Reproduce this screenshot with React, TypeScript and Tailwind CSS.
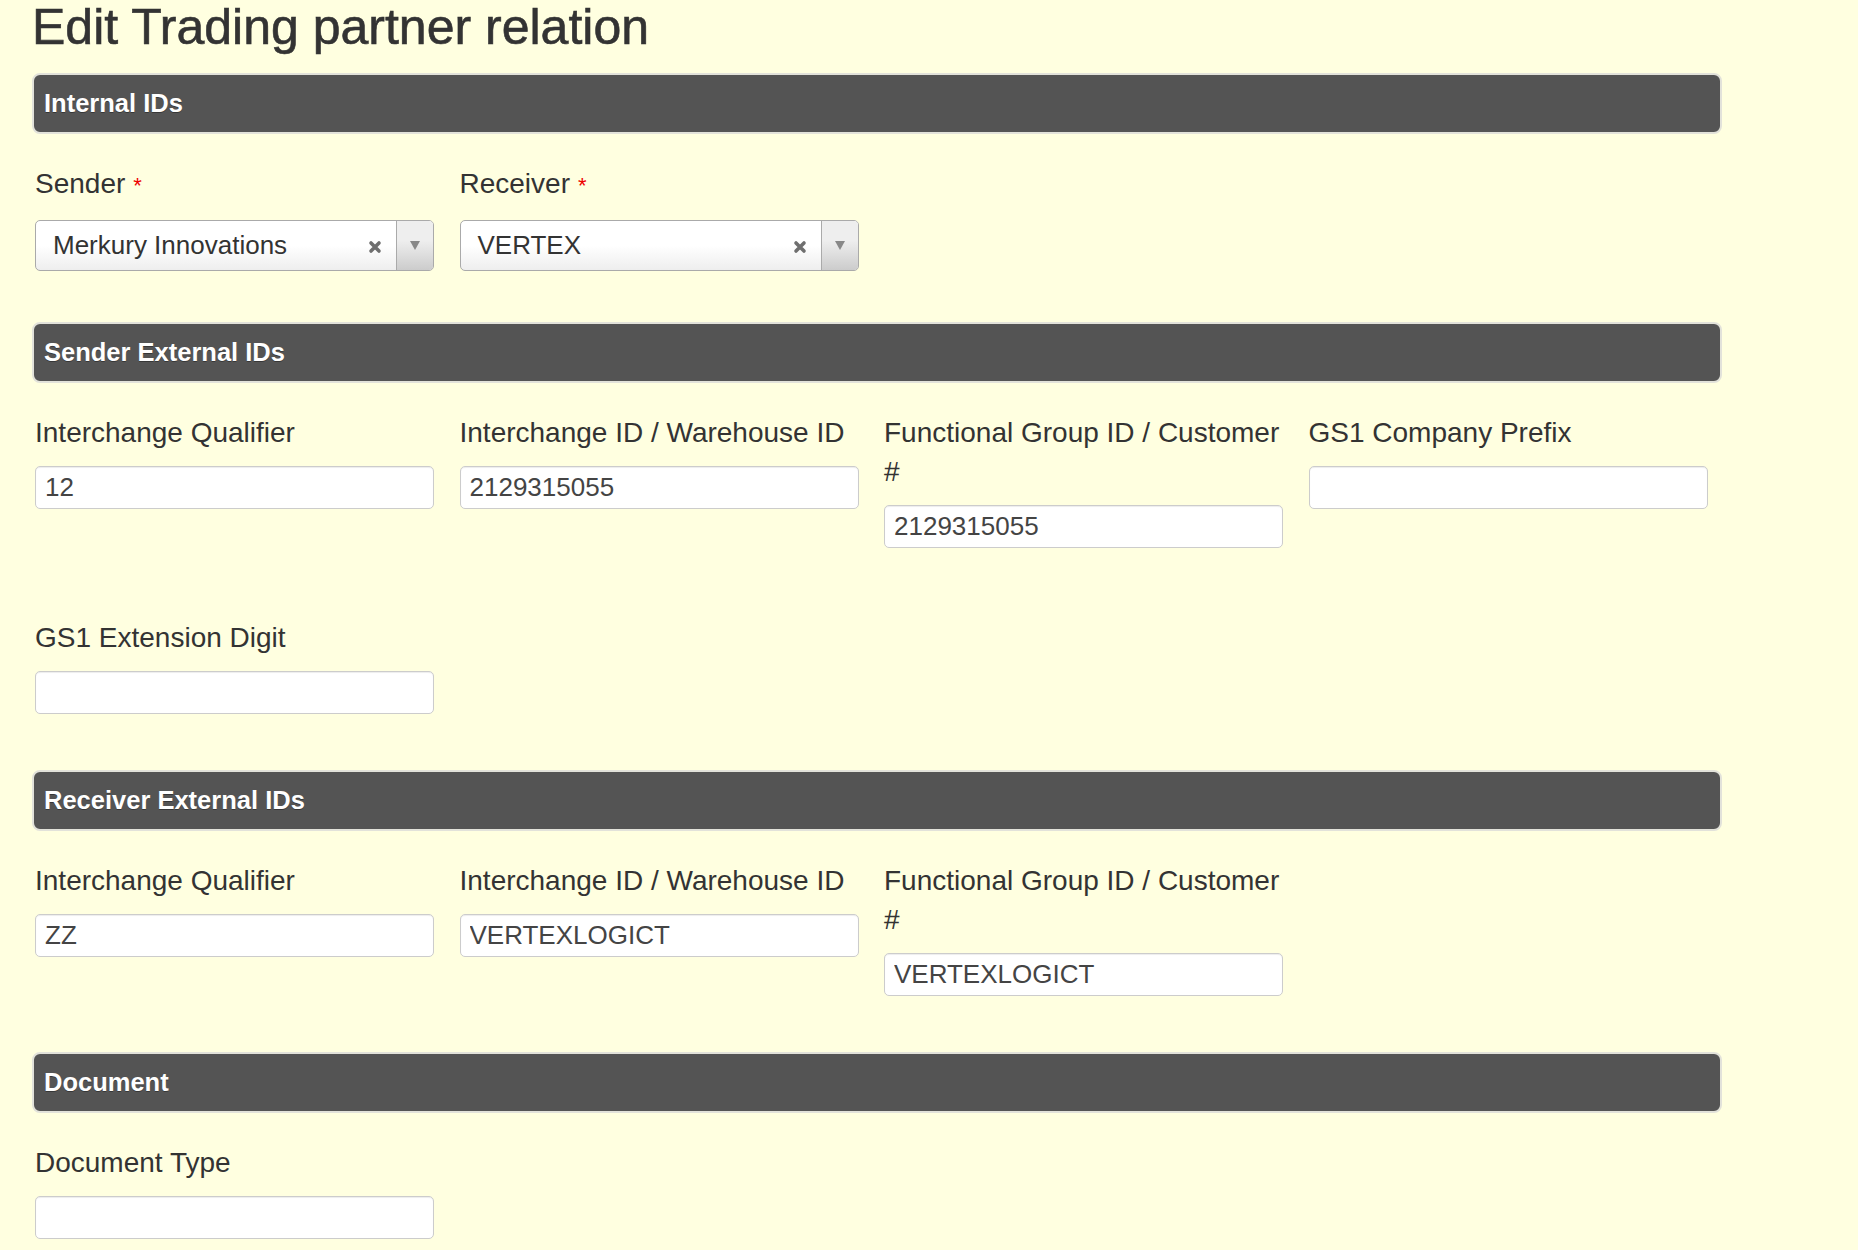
import React from "react";

function SectionBar({ title }: { title: string }) {
  return (
    <div className="flex h-[61px] items-center rounded-[8px] border-2 border-[#e2e2da] bg-[#545454] pl-[10px] text-[25.5px] font-bold text-white [text-shadow:0_1px_0_rgba(0,0,0,0.35)]">
      {title}
    </div>
  );
}

function Label({ text, required }: { text: string; required?: boolean }) {
  return (
    <label className="block text-[28px] leading-[39px] text-[#333]">
      {text}
      {required && <span className="ml-[8px] text-[22px] text-[#e00]">*</span>}
    </label>
  );
}

function Field({ label, value = "" }: { label: string; value?: string }) {
  return (
    <div>
      <Label text={label} />
      <input
        readOnly
        value={value}
        className="mt-[14px] block h-[43px] w-full rounded-[5px] border border-[#ccc] bg-white pl-[9px] text-[26px] text-[#444] shadow-[inset_0_1px_1px_rgba(0,0,0,0.075)] outline-none"
      />
    </div>
  );
}

function XIcon() {
  return (
    <svg width="14" height="14" viewBox="0 0 14 14">
      <path d="M3 3 L11 11 M11 3 L3 11" stroke="#6f6f6f" strokeWidth="3.6" strokeLinecap="round" />
    </svg>
  );
}

function Select2({ label, value }: { label: string; value: string }) {
  return (
    <div>
      <Label text={label} required />
      <div className="mt-[15px] flex h-[51px] items-stretch overflow-hidden rounded-[5px] border border-[#aaa] bg-[linear-gradient(to_top,#eeeeee_0%,#ffffff_50%)]">
        <div className="flex flex-1 items-center pl-[17px] text-[26px] text-[#333]">{value}</div>
        <div className="flex w-[42px] items-center justify-center pt-[3px]">
          <XIcon />
        </div>
        <div className="flex w-[37px] items-center justify-center border-l border-[#aaa] bg-[linear-gradient(to_top,#cccccc_0%,#eeeeee_60%)]">
          <svg width="10" height="9" viewBox="0 0 10 9">
            <polygon points="0,0 10,0 5,9" fill="#888" />
          </svg>
        </div>
      </div>
    </div>
  );
}

const grid = "grid grid-cols-[repeat(4,399px)] items-start gap-x-[25.5px] gap-y-[70px] pl-[3px]";

export default function App() {
  return (
    <div className="min-h-screen bg-[#ffffe0] pl-[32px] font-['Liberation_Sans',Arial,sans-serif]">
      <div className="w-[1690px]">
        <h1 className="text-[50px] leading-[54px] text-[#333] [-webkit-text-stroke:0.6px_#333]">
          Edit Trading partner relation
        </h1>

        <div className="mt-[19px]">
          <SectionBar title="Internal IDs" />
          <div className={`${grid} pt-[30px] pb-[51px]`}>
            <Select2 label="Sender" value="Merkury Innovations" />
            <Select2 label="Receiver" value="VERTEX" />
          </div>
        </div>

        <SectionBar title="Sender External IDs" />
        <div className={`${grid} pt-[30px] pb-[56px]`}>
          <Field label="Interchange Qualifier" value="12" />
          <Field label="Interchange ID / Warehouse ID" value="2129315055" />
          <Field label="Functional Group ID / Customer #" value="2129315055" />
          <Field label="GS1 Company Prefix" />
          <Field label="GS1 Extension Digit" />
        </div>

        <SectionBar title="Receiver External IDs" />
        <div className={`${grid} pt-[30px] pb-[56px]`}>
          <Field label="Interchange Qualifier" value="ZZ" />
          <Field label="Interchange ID / Warehouse ID" value="VERTEXLOGICT" />
          <Field label="Functional Group ID / Customer #" value="VERTEXLOGICT" />
        </div>

        <SectionBar title="Document" />
        <div className={`${grid} pt-[30px]`}>
          <Field label="Document Type" />
        </div>
      </div>
    </div>
  );
}
